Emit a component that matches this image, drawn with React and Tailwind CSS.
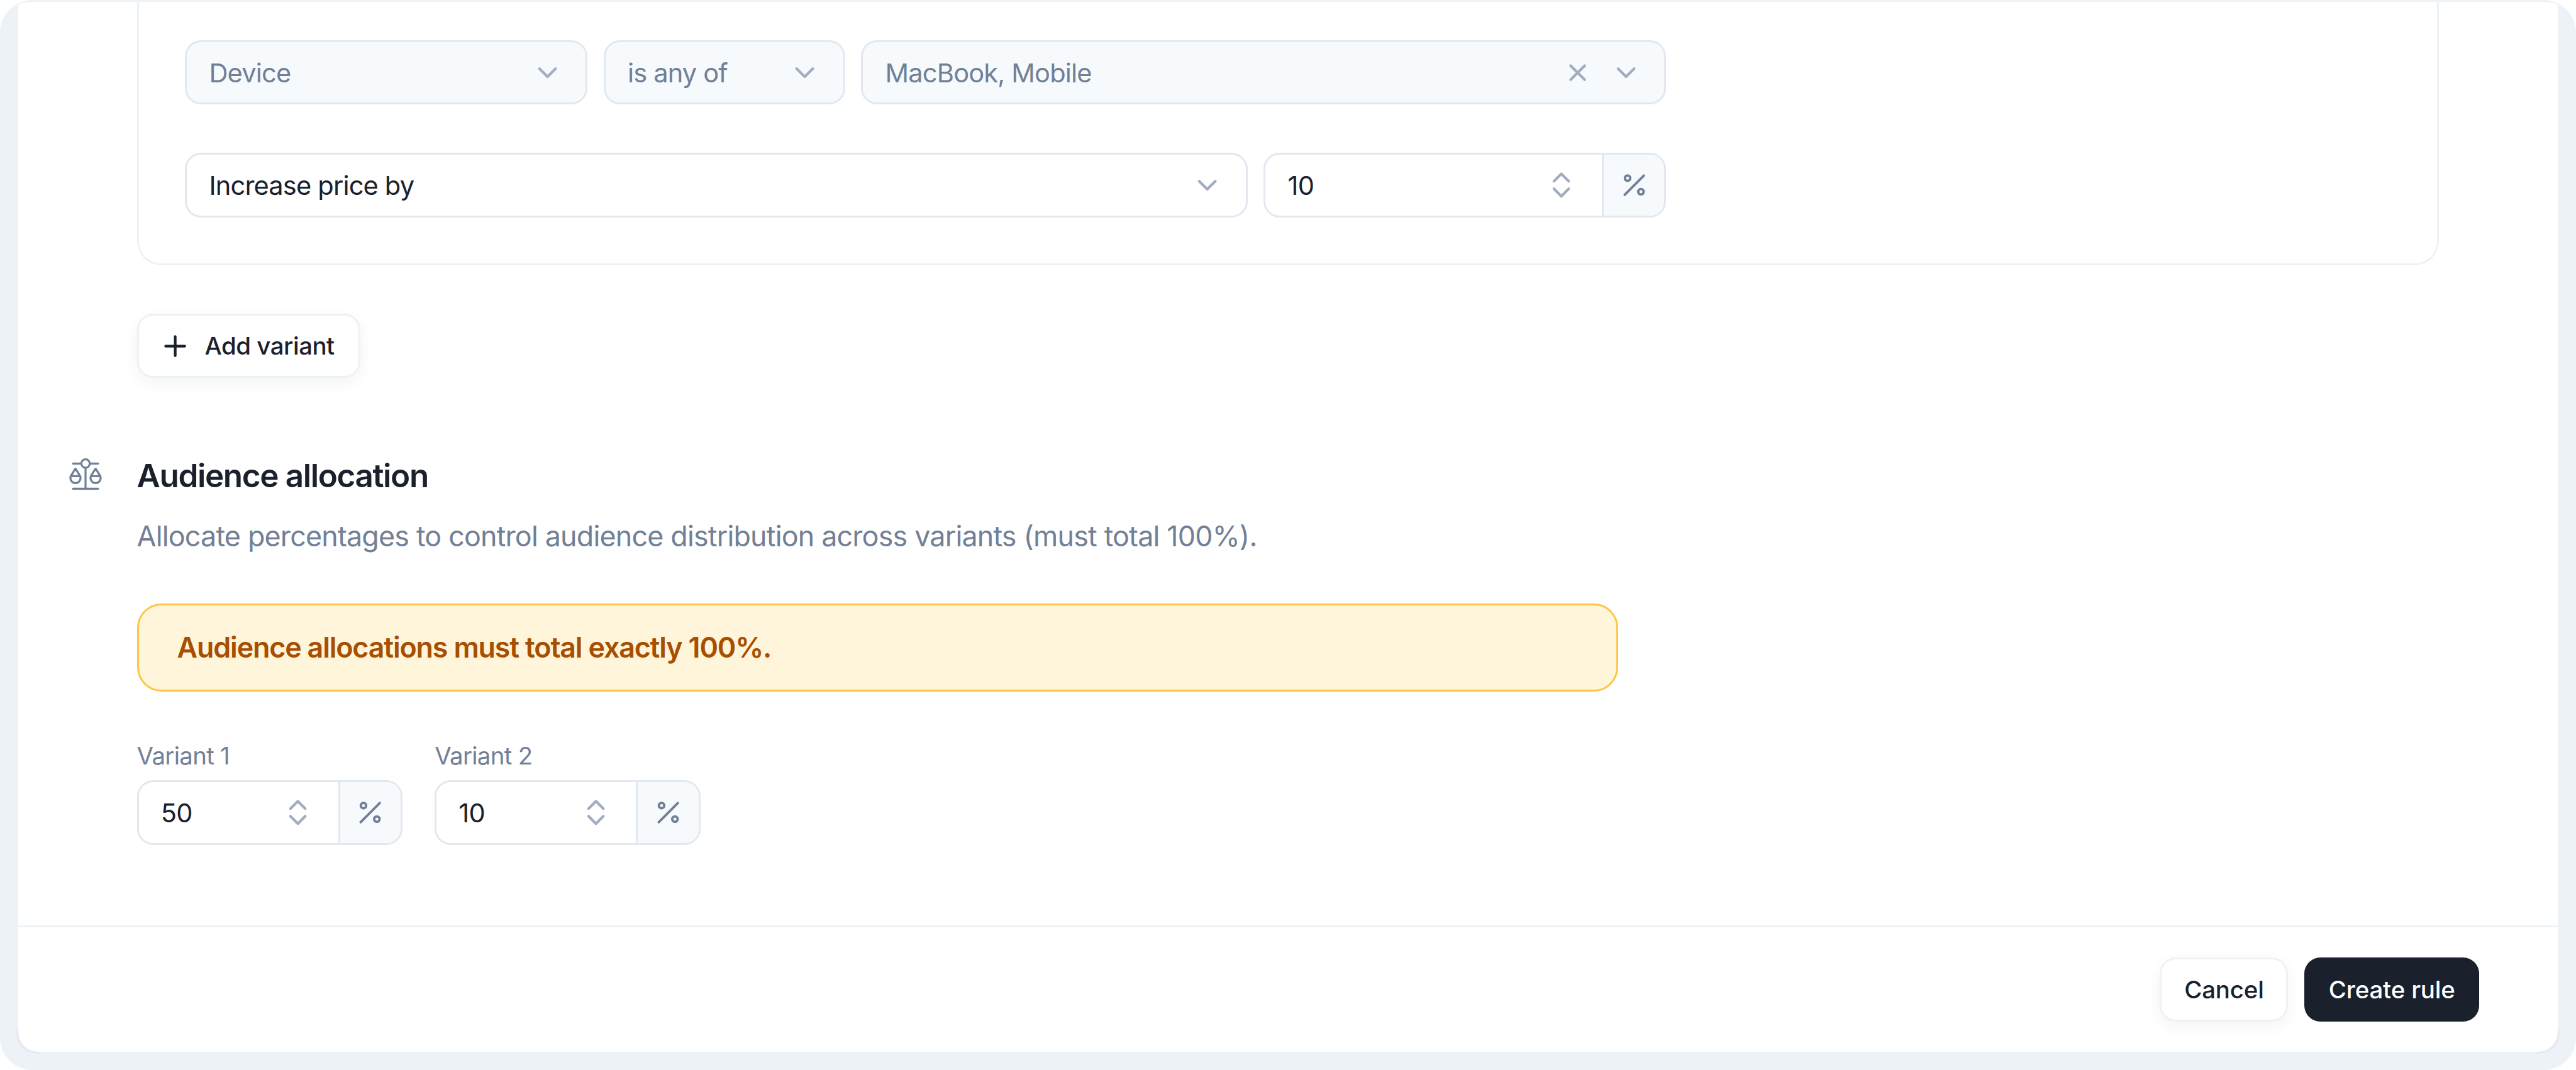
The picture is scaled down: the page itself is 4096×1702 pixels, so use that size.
import React from "react";

const Chevron = () => (
  <svg viewBox="0 0 64 64" className="w-[51.2px] h-[51.2px] shrink-0 text-[#a0aec0]" fill="none" stroke="currentColor" strokeWidth="5.3" strokeLinecap="round" strokeLinejoin="round">
    <path d="M16 24 L32 40 L48 24" />
  </svg>
);
const Cross = () => (
  <svg viewBox="0 0 64 64" className="w-[51.2px] h-[51.2px] shrink-0 text-[#a0aec0]" fill="none" stroke="currentColor" strokeWidth="5.3" strokeLinecap="round">
    <path d="M18 18 L46 46 M46 18 L18 46" />
  </svg>
);
const Updown = () => (
  <svg viewBox="0 0 64 64" className="w-[51.2px] h-[51.2px] shrink-0 text-[#a0aec0]" fill="none" stroke="currentColor" strokeWidth="5.3" strokeLinecap="round" strokeLinejoin="round">
    <path d="M17.3 24 L32 9.3 L46.7 24 M17.3 39 L32 54 L46.7 39" />
  </svg>
);
const Percent = () => (
  <svg viewBox="0 0 64 64" className="w-[51.2px] h-[51.2px] text-[#718096]" fill="none" stroke="currentColor" strokeWidth="4.8" strokeLinecap="round">
    <path d="M13 51 L51 13" />
    <circle cx="18.7" cy="18" r="5.4" />
    <circle cx="45.3" cy="45" r="5.4" />
  </svg>
);
const Plus = () => (
  <svg viewBox="0 0 64 64" className="w-[51.2px] h-[51.2px] shrink-0 text-[#1a202c]" fill="none" stroke="currentColor" strokeWidth="5.3" strokeLinecap="round">
    <path d="M32 13 V51 M13 32 H51" />
  </svg>
);
const Scale = () => (
  <svg viewBox="90 80 240 240" className="w-[64px] h-[64px] shrink-0 mt-[6px] text-[#718096]" fill="none" stroke="currentColor" strokeWidth="12" strokeLinecap="round" strokeLinejoin="round">
    <path d="M135 130 H184 M236 130 H285 M210 156 V280 M135 280 H285" />
    <circle cx="210" cy="130" r="25" />
    <path d="M150 160 L123 203 A30 30 0 1 0 177 203 Z M123 205 H177" />
    <path d="M270 160 L243 203 A30 30 0 1 0 297 203 Z M243 205 H297" />
  </svg>
);

function Select({ width, muted, children, clear }) {
  return (
    <div className={`${width} h-[102.4px] shrink-0 flex items-center justify-between pl-[35.2px] pr-[35.2px] rounded-[25.6px] border-[3.2px] border-[#e2e8f0] text-[41.6px] tracking-[-0.02em] ${muted ? "bg-[#f7fafc] text-[#718096]" : "bg-white text-[#1a202c]"}`}>
      <span className="pt-[1.6px]">{children}</span>
      <span className="flex items-center gap-[25.6px]">
        {clear && <Cross />}
        <Chevron />
      </span>
    </div>
  );
}

function NumberField({ width, value }) {
  return (
    <div className={`${width} h-[102.4px] shrink-0 flex rounded-[25.6px] border-[3.2px] border-[#e2e8f0] overflow-hidden bg-white text-[41.6px] tracking-[-0.02em]`}>
      <div className="flex-1 flex items-center justify-between pl-[35.2px] pr-[38.4px] text-[#1a202c]">
        <span className="pt-[1.6px]">{value}</span>
        <Updown />
      </div>
      <div className="w-[99.4px] shrink-0 flex items-center justify-center bg-[#f7fafc] border-l-[3.2px] border-[#e2e8f0]">
        <Percent />
      </div>
    </div>
  );
}

export default function App() {
  return (
    <div className="relative w-full h-screen overflow-hidden rounded-[51.2px] bg-[#edf2f7] pt-[3.2px] px-[28.8px] pb-[28.8px] font-[family-name:Inter,sans-serif] text-[44.8px] leading-[64px] text-[#1a202c]">
      <div className="absolute left-[25.6px] bottom-[25.6px] w-[40px] h-[40px] rounded-bl-[32px] bg-[#e6ebf1]" />
      <div className="absolute right-[25.6px] bottom-[25.6px] w-[40px] h-[40px] rounded-br-[32px] bg-[#e6ebf1]" />
      <div className="relative h-full flex flex-col bg-white rounded-t-[19px_6px] rounded-b-[32px] overflow-hidden">
        <div className="flex-1 min-h-0">
          <div className="mx-[188.8px] border-x-[3.2px] border-b-[3.2px] border-[#edf2f7] rounded-b-[38.4px] pt-[60.8px] pb-[73.6px] px-[73.6px]">
            <div className="flex gap-[25.6px]">
              <Select width="w-[640px]" muted>Device</Select>
              <Select width="w-[384px]" muted>is any of</Select>
              <Select width="w-[1280px]" muted clear>MacBook, Mobile</Select>
            </div>
            <div className="flex gap-[25.6px] mt-[76.8px]">
              <Select width="w-[1689.6px]">Increase price by</Select>
              <NumberField width="w-[640px]" value="10" />
            </div>
          </div>

          <button className="ml-[188.8px] mt-[76.8px] h-[102.4px] flex items-center gap-[21.8px] pl-[32px] pr-[38.4px] rounded-[25.6px] bg-white border-[3.2px] border-[#edf2f7] shadow-[0_8px_24px_rgba(26,32,44,0.05)] font-medium text-[38.4px] tracking-[-0.012em]">
            <Plus />
            <span>Add variant</span>
          </button>

          <div className="flex pl-[75.2px] gap-[49.6px] mt-[116.6px]">
            <Scale />
            <h2 className="text-[51.2px] leading-[76.8px] font-semibold tracking-[-0.027em]">Audience allocation</h2>
          </div>
          <div className="pl-[188.8px]">
            <p className="mt-[26.4px] text-[#718096] leading-[64px] tracking-[-0.018em]">Allocate percentages to control audience distribution across variants (must total 100%).</p>
            <div className="mt-[74.4px] w-[2355.2px] h-[140.8px] flex items-center pl-[61px] rounded-[38.4px] bg-[#fff5da] border-[3.2px] border-[#ffc445] text-[#a84e00] font-semibold tracking-[-0.026em]">
              Audience allocations must total exactly 100%.
            </div>
            <div className="flex gap-[51.2px] mt-[76.8px]">
              <div>
                <div className="text-[38.4px] leading-[51.2px] text-[#718096] mb-[12.8px] tracking-[-0.018em]">Variant 1</div>
                <NumberField width="w-[422.4px]" value="50" />
              </div>
              <div>
                <div className="text-[38.4px] leading-[51.2px] text-[#718096] mb-[12.8px] tracking-[-0.018em]">Variant 2</div>
                <NumberField width="w-[422.4px]" value="10" />
              </div>
            </div>
          </div>
        </div>

        <div className="flex justify-end gap-[25.6px] border-t-[3.2px] border-[#edf2f7] pt-[48px] pb-[48px] pr-[124.8px] font-medium text-[38.4px] tracking-[-0.004em]">
          <button className="h-[102.4px] w-[204px] rounded-[25.6px] bg-white border-[3.2px] border-[#edf2f7] shadow-[0_8px_24px_rgba(26,32,44,0.05)]">Cancel</button>
          <button className="h-[102.4px] w-[278.4px] rounded-[25.6px] bg-[#1a202c] text-white">Create rule</button>
        </div>
      </div>
    </div>
  );
}
